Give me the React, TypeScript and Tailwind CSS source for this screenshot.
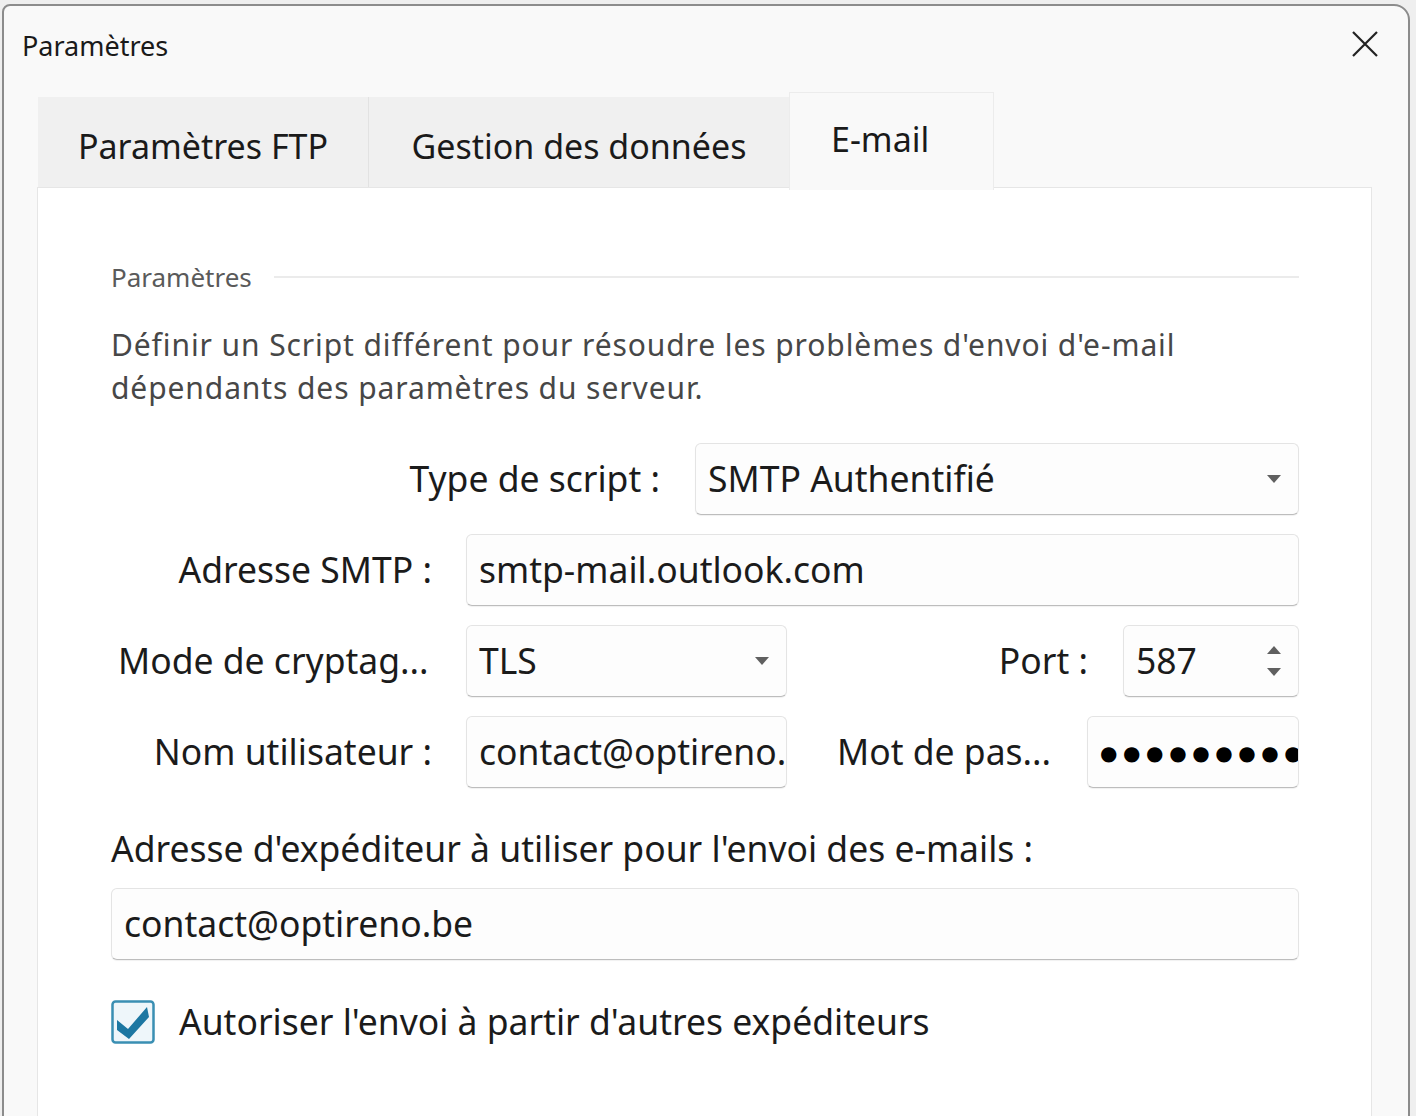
import * as React from "react";

function Arrow() {
  return (
    <svg width="16" height="10" viewBox="0 0 16 10" className="shrink-0">
      <path d="M1 1 L15 1 L8 9 Z" fill="#606060" />
    </svg>
  );
}

function Box({ className = "", children }: { className?: string; children?: React.ReactNode }) {
  return (
    <div
      className={
        "flex h-[72px] items-center rounded-[6px] border border-[#e4e4e4] border-b-[#bdbdbd] bg-[#fdfdfd] px-[12px] text-[35.5px] text-[#1b1b1b] shadow-[0_1px_1px_rgba(0,0,0,0.06)] " +
        className
      }
    >
      {children}
    </div>
  );
}

export default function App() {
  return (
    <div className="h-[1116px] w-[1416px] overflow-hidden bg-[#efefef] font-['Noto_Sans',sans-serif]">
      <div className="ml-[2px] mt-[4px] h-[1130px] w-[1408px] rounded-tl-[8px] rounded-tr-[16px] border-2 border-[#8c8c8c] bg-[#f9f9f9]">
        {/* title bar */}
        <div className="flex h-[81px] items-start justify-between pl-[18px] pr-[29px] pt-[22px]">
          <span className="text-[27px] leading-[36px] text-[#1a1a1a]">Paramètres</span>
          <svg width="28" height="28" viewBox="0 0 28 28" className="mt-[2px]">
            <path d="M2 2 L26 26 M26 2 L2 26" stroke="#222" strokeWidth="2.2" />
          </svg>
        </div>

        {/* tabs */}
        <div className="ml-[34px] flex h-[100px] items-end">
          <div className="flex h-[90px] w-[331px] items-center justify-center border-r border-[#e2e2e2] bg-[#f0f0f0] pt-[8px] text-[34px] text-[#1a1a1a]">
            Paramètres FTP
          </div>
          <div className="flex h-[90px] w-[420px] items-center justify-center bg-[#f0f0f0] pt-[8px] text-[34px] text-[#1a1a1a]">
            Gestion des données
          </div>
          <div className="mb-[-3px] flex h-[98px] w-[205px] items-start border border-b-0 border-[#ececec] bg-[#f9f9f9] pl-[41px] pt-[21px] text-[34px] text-[#1a1a1a]">
            E-mail
          </div>
        </div>

        {/* panel */}
        <div className="ml-[33px] h-[940px] w-[1335px] border border-[#e6e6e6] bg-white pl-[73px] pr-[72px] pt-[71px]">
          <div className="flex items-center gap-[22px]">
            <span className="text-[26px] leading-[36px] text-[#5a5a5a]">Paramètres</span>
            <div className="h-[2px] flex-1 bg-[#ebebeb]" />
          </div>
          <p className="mt-[28px] text-[30px] leading-[43px] tracking-[0.9px] text-[#474747]">
            Définir un Script différent pour résoudre les problèmes d'envoi d'e-mail
            <br />
            dépendants des paramètres du serveur.
          </p>

          <div className="mt-[34px] flex flex-col gap-[19px] text-[35.5px] text-[#1b1b1b]">
            <div className="flex items-center gap-[35px]">
              <span className="w-[549px] text-right">Type de script :</span>
              <Box className="flex-1 justify-between pr-[16px]">
                <span>SMTP Authentifié</span>
                <Arrow />
              </Box>
            </div>
            <div className="flex items-center gap-[34px]">
              <span className="w-[321px] text-right">Adresse SMTP :</span>
              <Box className="flex-1">smtp-mail.outlook.com</Box>
            </div>
            <div className="flex items-center">
              <span className="w-[321px] overflow-hidden whitespace-nowrap pl-[7px]">Mode de cryptag...</span>
              <Box className="ml-[34px] w-[321px] justify-between pr-[16px]">
                <span>TLS</span>
                <Arrow />
              </Box>
              <span className="flex-1 pr-[35px] text-right">Port :</span>
              <Box className="w-[176px] justify-between pr-[16px]">
                <span>587</span>
                <div className="flex flex-col gap-[12px]">
                  <svg width="16" height="10" viewBox="0 0 16 10">
                    <path d="M1 9 L15 9 L8 1 Z" fill="#606060" />
                  </svg>
                  <svg width="16" height="10" viewBox="0 0 16 10">
                    <path d="M1 1 L15 1 L8 9 Z" fill="#606060" />
                  </svg>
                </div>
              </Box>
            </div>
            <div className="flex items-center">
              <span className="w-[321px] text-right">Nom utilisateur :</span>
              <Box className="ml-[34px] w-[321px] overflow-hidden whitespace-nowrap">
                <span className="whitespace-nowrap">contact@optireno.</span>
              </Box>
              <span className="ml-[50px] w-[214px] whitespace-nowrap">Mot de pas...</span>
              <Box className="ml-[36px] flex-1 overflow-hidden whitespace-nowrap pl-[10px] pr-0 text-[26px] tracking-[1.6px] text-black">
                <span className="whitespace-nowrap">●●●●●●●●●●</span>
              </Box>
            </div>
          </div>

          <p className="mt-[36px] text-[35.5px] leading-[48px] text-[#1b1b1b]">
            Adresse d'expéditeur à utiliser pour l'envoi des e-mails :
          </p>
          <Box className="mt-[16px] w-full">contact@optireno.be</Box>

          <label className="mt-[35px] flex items-center gap-[24px] text-[35.5px] text-[#1b1b1b]">
            <svg width="44" height="44" viewBox="0 0 44 44" className="shrink-0">
              <rect x="1.5" y="1.5" width="41" height="41" rx="3" fill="#eef6fa" stroke="#3a8fb3" strokeWidth="2.5" />
              <path d="M6 20 L17 29 L36 7 L38 17 L18 39 L6 30 Z" fill="#1c77a2" />
            </svg>
            <span>Autoriser l'envoi à partir d'autres expéditeurs</span>
          </label>
        </div>
      </div>
    </div>
  );
}
